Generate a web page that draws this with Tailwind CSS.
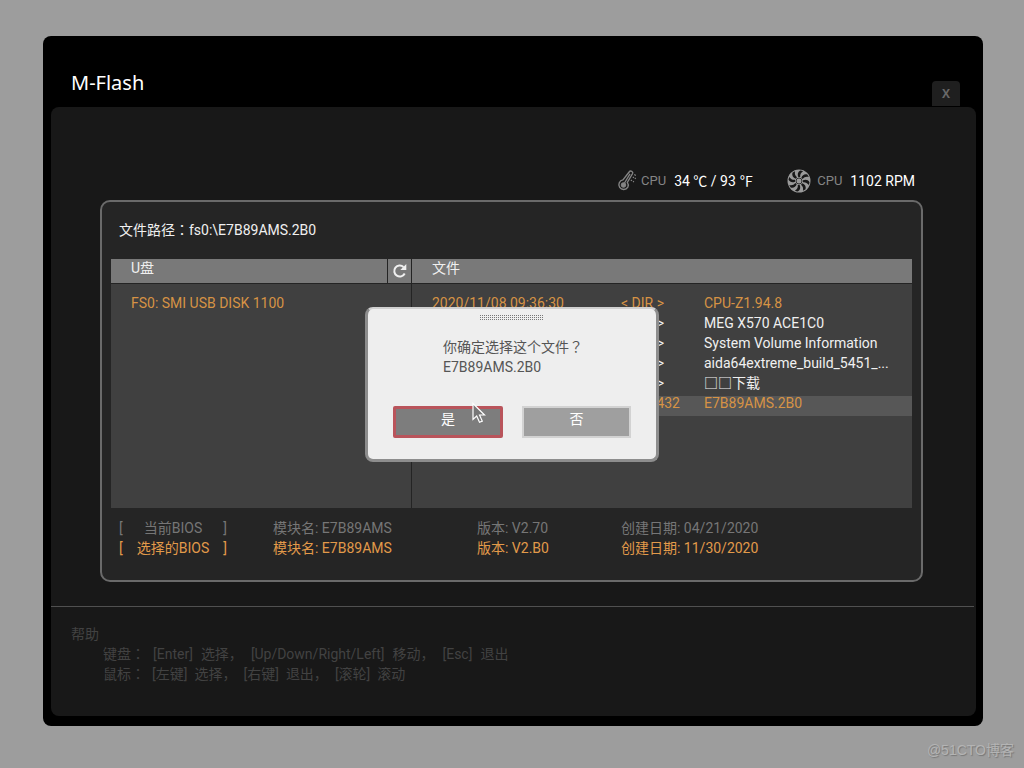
<!DOCTYPE html>
<html lang="zh-CN">
<head>
<meta charset="utf-8">
<meta name="viewport" content="width=device-width, initial-scale=1">
<title>M-Flash</title>
<script src="https://cdn.jsdelivr.net/npm/@tailwindcss/browser@4"></script>
</head>
<body class="relative flex min-h-screen flex-col bg-[#9d9d9d] pt-9 pr-[41px] pb-[42px] pl-[43px] font-['Roboto','Noto_Sans_CJK_SC',sans-serif] text-[14px] leading-5 text-[#f0f0f0]">
  <main class="flex flex-1 flex-col rounded-lg bg-black pr-[7px] pb-[10px] pl-2">
    <header class="flex h-[71px] items-end justify-between pr-4 pl-5">
      <h1 class="pb-2.5 font-['Noto_Sans',sans-serif] text-[20px] leading-7 text-white">M-Flash</h1>
      <button type="button" aria-label="关闭" class="mb-px h-[25px] w-7 rounded-t bg-[#1f1f1f] font-['Open_Sans',sans-serif] text-[12px] font-bold text-[#686868]">X</button>
    </header>

    <div class="flex flex-1 flex-col rounded-lg bg-[#181818]">
      <section class="pt-[62px] pr-[53px] pl-[49px]">
        <div class="flex h-[31px] items-start justify-end gap-[34px] pr-2">
          <div class="flex items-center">
            <svg class="mr-1 h-6 w-5" viewBox="0 0 20 24" fill="none" stroke="#858585" aria-hidden="true">
              <path d="M12.500 2.500c1-1.400 4 .2 3.100 2L10.300 13.400c1 1.300 1.300 3 .5 4.700a4.800 4.800 0 1 1-4.800-7.200z" stroke-width="1.400"/>
              <circle cx="6.500" cy="16" r="2.300" fill="#858585"/>
              <path d="M7.500 14 13 4.800" stroke-width="1.300"/>
              <path d="m17.300 5.500 1.500 1M15.800 8l1.200.8M17.800 9l1 .7M13.800 11l1.200.8M16 12.300l1 .6" stroke-width="1.200"/>
            </svg>
            <span class="mr-2 text-[13px] text-[#858585]">CPU</span>
            <span class="text-white">34 ℃ / 93 ℉</span>
          </div>
          <div class="flex items-center">
            <svg class="mr-1.5 size-6" viewBox="0 0 24 24" aria-hidden="true">
              <circle cx="12" cy="12" r="11.500" fill="#9a9a9a"/>
              <g fill="#181818">
                <path id="blade" d="M11.300 8C10.300 5.500 10.600 3 13.200 1.500c1 .1 2 .4 2.900.8C13.700 4 13 5.500 13.200 8z"/>
                <use href="#blade" transform="rotate(45 12 12)"/><use href="#blade" transform="rotate(90 12 12)"/>
                <use href="#blade" transform="rotate(135 12 12)"/><use href="#blade" transform="rotate(180 12 12)"/>
                <use href="#blade" transform="rotate(225 12 12)"/><use href="#blade" transform="rotate(270 12 12)"/>
                <use href="#blade" transform="rotate(315 12 12)"/>
              </g>
              <circle cx="12" cy="12" r="3" fill="#9a9a9a" stroke="#303030"/>
            </svg>
            <span class="mr-2 text-[13px] text-[#858585]">CPU</span>
            <span class="text-white">1102 RPM</span>
          </div>
        </div>

        <div class="rounded-[10px] border-2 border-[#6a6a6a] bg-[#252525] px-[9px] pt-[18px] pb-[22px]">
          <p class="mb-[19px] pl-2">文件路径<span lang="zh-TW">：</span>fs0:\E7B89AMS.2B0</p>

          <div class="grid grid-cols-[301px_1fr] bg-[#404040]">
            <section class="border-r border-[#242424]">
              <div class="flex h-[25px] border-b border-[#242424] bg-[#797979] leading-[18px]">
                <h2 class="flex-1 pl-5">U盘</h2>
                <button type="button" aria-label="刷新" class="grid w-6 place-items-center border-l border-[#242424]">
                  <svg class="size-4" viewBox="0 0 16 16" fill="none" stroke="#f0f0f0" stroke-width="2" aria-hidden="true">
                    <path d="M11.500 4A5.500 5.500 0 1 0 12.700 10.500"/>
                    <path d="M14.300 1v6h-6z" fill="#f0f0f0" stroke="none"/>
                  </svg>
                </button>
              </div>
              <ul class="px-5 pt-3 leading-[14px] text-[#d69345]"><li>FS0: SMI USB DISK 1100</li></ul>
            </section>
            <section>
              <h2 class="h-[25px] border-b border-[#242424] bg-[#797979] pl-5 leading-[18px]">文件</h2>
              <table class="mt-3 mb-[92px] w-full table-fixed border-collapse leading-[14px]">
                <colgroup><col class="w-[168px]"><col class="w-[124px]"><col></colgroup>
                <tbody>
                  <tr class="h-5 align-top text-[#d69345]"><td class="pl-5">2020/11/08 09:36:30</td><td class="pr-10 text-right">&lt; DIR &gt;</td><td>CPU-Z1.94.8</td></tr>
                  <tr class="h-5 align-top"><td></td><td class="pr-10 text-right">&lt; DIR &gt;</td><td>MEG X570 ACE1C0</td></tr>
                  <tr class="h-5 align-top"><td></td><td class="pr-10 text-right">&lt; DIR &gt;</td><td>System Volume Information</td></tr>
                  <tr class="h-5 align-top"><td></td><td class="pr-10 text-right">&lt; DIR &gt;</td><td>aida64extreme_build_5451_...</td></tr>
                  <tr class="h-5 align-top"><td></td><td class="pr-10 text-right">&lt; DIR &gt;</td><td>□□下载</td></tr>
                  <tr class="h-5 bg-[#575757] align-top text-[#d69345]"><td></td><td class="pr-6 text-right">33554432</td><td>E7B89AMS.2B0</td></tr>
                </tbody>
              </table>
            </section>
          </div>

          <table class="mt-2.5 ml-2 table-fixed border-collapse">
            <colgroup><col class="w-[154px]"><col class="w-[204px]"><col class="w-36"><col class="w-40"></colgroup>
            <tbody>
              <tr class="text-[#767676]"><td><span class="flex w-[108px] justify-between"><span>[</span><span>当前BIOS</span><span>]</span></span></td><td>模块名: E7B89AMS</td><td>版本: V2.70</td><td>创建日期: 04/21/2020</td></tr>
              <tr class="text-[#e29a4a]"><td><span class="flex w-[108px] justify-between"><span>[</span><span>选择的BIOS</span><span>]</span></span></td><td>模块名: E7B89AMS</td><td>版本: V2.B0</td><td>创建日期: 11/30/2020</td></tr>
            </tbody>
          </table>
        </div>
      </section>

      <footer class="mt-6 mr-[2px] border-t border-[#505050] pt-[17px] pb-8 pl-5 text-[#424242]">
        <h2>帮助</h2>
        <p class="flex flex-wrap gap-2 pl-8">
          <span>键盘<span lang="zh-TW">：</span></span><span>[Enter]</span><span>选择，</span><span>[Up/Down/Right/Left]</span><span>移动，</span><span>[Esc]</span><span>退出</span>
        </p>
        <p class="flex flex-wrap gap-[7px] pl-8">
          <span>鼠标<span lang="zh-TW">：</span></span><span>[左键]</span><span>选择，</span><span>[右键]</span><span>退出，</span><span>[滚轮]</span><span>滚动</span>
        </p>
      </footer>
    </div>
  </main>

  <div class="absolute inset-0 grid place-items-center">
    <div role="dialog" aria-modal="true" aria-labelledby="question" class="relative w-[294px] rounded-lg border-3 border-t-2 border-[#8d8d8d] border-t-[#d0d0d0] bg-[#eee] px-[25px] pt-1.5 pb-[21px] text-[#555]">
      <svg class="mx-auto h-1.5 w-16" aria-hidden="true">
        <defs><pattern id="grip" width="2" height="2" patternUnits="userSpaceOnUse"><rect width="1" height="1" fill="#777"/></pattern></defs>
        <rect width="64" height="6" fill="url(#grip)"/>
      </svg>
      <p id="question" class="mt-4 pl-[50px]">你确定选择这个文件<span lang="zh-TW">？</span><br>E7B89AMS.2B0</p>
      <div class="mt-[29px] flex justify-between">
        <button type="button" class="h-8 w-[110px] rounded-xs border-3 border-[#b9545b] bg-[#7d7d7d] pb-1.5 text-white">是</button>
        <button type="button" class="h-8 w-[109px] border-2 border-[#d2d2d2] bg-[#9f9f9f] pb-1.5 text-white">否</button>
      </div>
      <svg class="absolute top-[93px] left-[104px] h-[22px] w-[14px]" viewBox="0 0 14 22" aria-hidden="true">
        <path d="M1 1.500v16l3.700-3.400 2.800 6.200 2.800-1.200-2.800-6.100h5z" fill="#777" stroke="#fff" stroke-width="1.200"/>
      </svg>
    </div>
  </div>

  <p class="absolute right-2.5 bottom-2 font-['Liberation_Sans','Noto_Sans_CJK_SC',sans-serif] text-[#b4b4b4] [text-shadow:1px_1px_1px_#777]">@51CTO博客</p>
</body>
</html>
